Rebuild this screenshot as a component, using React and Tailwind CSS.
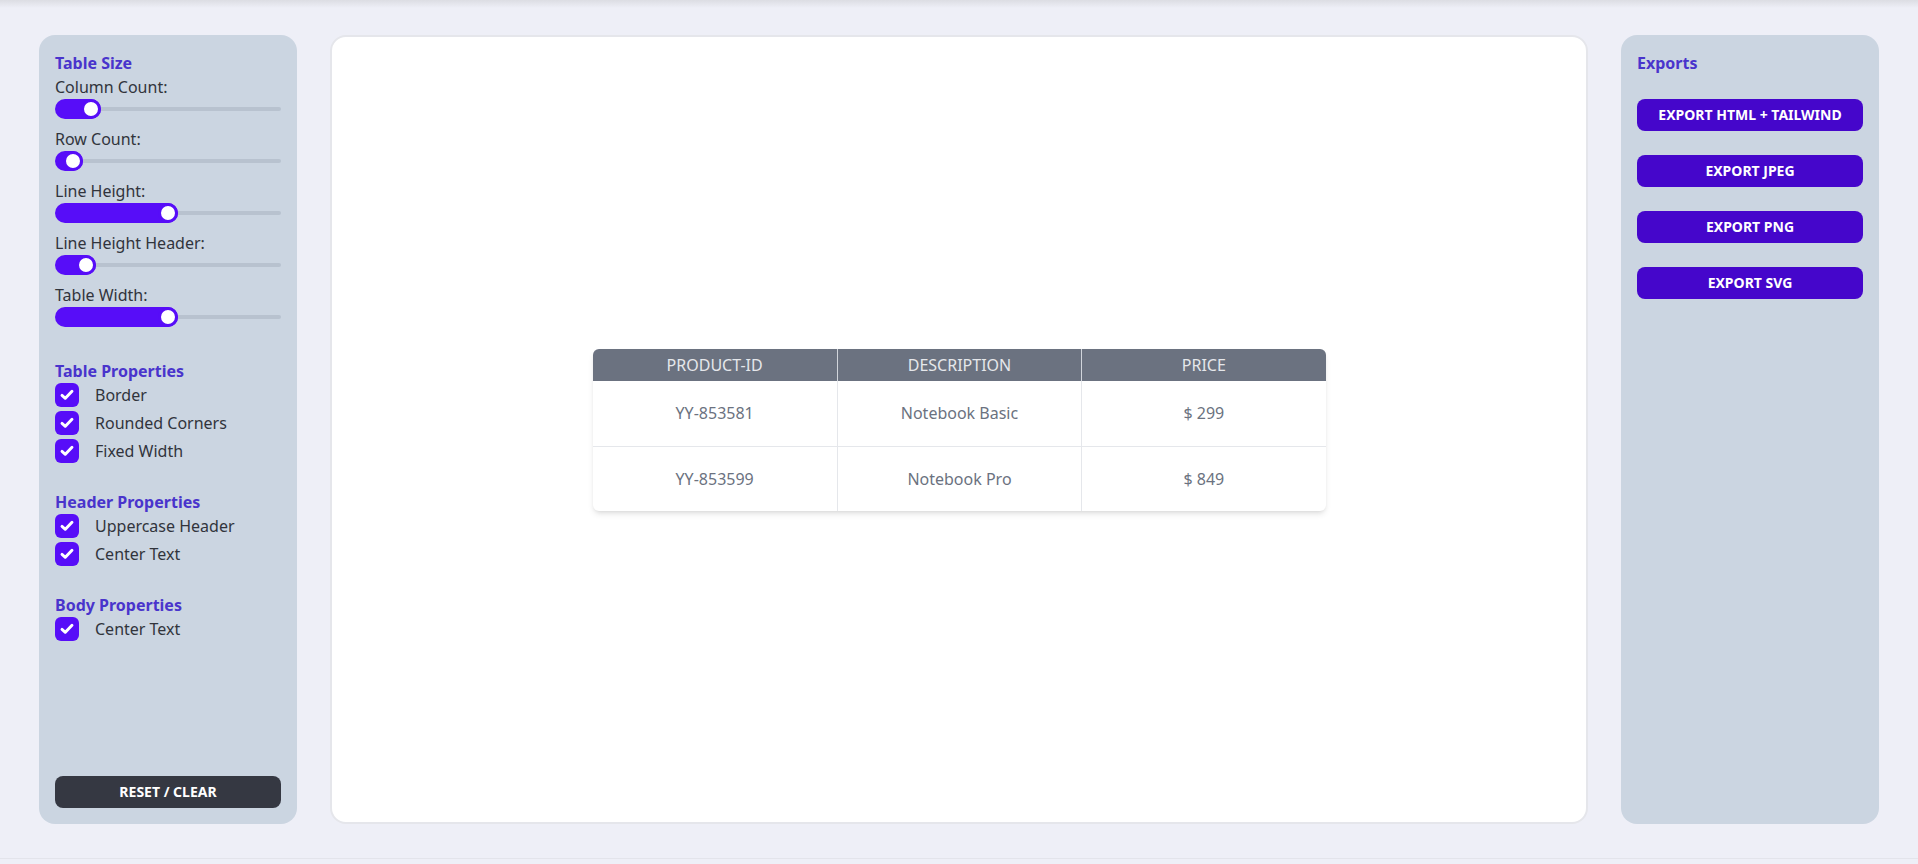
import React from "react";

const sliders = [
  { id: 1, label: "Column Count:", fill: 46 },
  { id: 2, label: "Row Count:", fill: 28 },
  { id: 3, label: "Line Height:", fill: 123 },
  { id: 4, label: "Line Height Header:", fill: 41 },
  { id: 5, label: "Table Width:", fill: 123 },
];

const sections = [
  { id: 1, title: "Table Properties", items: ["Border", "Rounded Corners", "Fixed Width"], gap: "mt-6" },
  { id: 2, title: "Header Properties", items: ["Uppercase Header", "Center Text"], gap: "mt-[27px]" },
  { id: 3, title: "Body Properties", items: ["Center Text"], gap: "mt-[27px]" },
];

const rows = [
  { id: "YY-853581", desc: "Notebook Basic", price: "$ 299" },
  { id: "YY-853599", desc: "Notebook Pro", price: "$ 849" },
];

const exportsList = ["Export HTML + Tailwind", "Export JPEG", "Export PNG", "Export SVG"];

const Heading = ({ children, className = "" }) => (
  <h2 className={`text-base leading-6 font-bold text-[#4934cc] ${className}`}>{children}</h2>
);

const Slider = ({ label, fill }) => (
  <div className="mb-2">
    <div className="text-base leading-6 text-[#31343c]">{label}</div>
    <div className="flex h-5 items-center">
      {/* filled part with thumb at its end */}
      <div className="flex h-5 justify-end rounded-full bg-[#570df8]" style={{ width: fill }}>
        <div className="h-5 w-5 rounded-full border-[3px] border-[#570df8] bg-white" />
      </div>
      <div className="h-1 flex-1 rounded-r-full bg-[#b8c2cf]" />
    </div>
  </div>
);

const Checkbox = ({ label }) => (
  <div className="flex items-center gap-4">
    <div className="flex h-6 w-6 items-center justify-center rounded-md bg-[#570df8]">
      <svg viewBox="0 0 24 24" className="h-5 w-5" fill="none" stroke="white" strokeWidth="3.5" strokeLinecap="round" strokeLinejoin="round">
        <path d="M6 12.5l4 3.5 8-8.5" />
      </svg>
    </div>
    <span className="text-base leading-6 text-[#31343c]">{label}</span>
  </div>
);

const App = () => {
  return (
    <div className="h-[864px] bg-[#eeeff7] font-['Noto_Sans',sans-serif]">
      <div className="h-[859px] border-b border-[#e3e4eb]">
        <div className="h-2 bg-gradient-to-b from-[#dcdde3] to-[#eeeff7]" />
        <div className="flex gap-[33px] px-[39px] pt-[27px]">
          {/* Left settings panel */}
          <div className="flex h-[789px] w-[258px] flex-col rounded-2xl bg-[#cbd5e1] p-4">
            <Heading>Table Size</Heading>
            {sliders.map((s) => (
              <Slider key={s.id} label={s.label} fill={s.fill} />
            ))}
            {sections.map((sec) => (
              <div key={sec.id} className={sec.gap}>
                <Heading>{sec.title}</Heading>
                <div className="flex flex-col gap-1">
                  {sec.items.map((item) => (
                    <Checkbox key={item} label={item} />
                  ))}
                </div>
              </div>
            ))}
            <button className="mt-auto h-8 w-full rounded-lg bg-[#353842] text-sm font-bold uppercase text-white">
              Reset / Clear
            </button>
          </div>

          {/* Preview */}
          <div className="flex h-[789px] flex-1 items-center justify-center rounded-2xl border-2 border-[#e5e6eb] bg-white">
            <div className="w-[733px] overflow-hidden rounded-md bg-white shadow-md">
              <div className="grid h-8 grid-cols-3 bg-[#6b7280] text-base text-[#e5e7eb]">
                <div className="flex items-center justify-center">PRODUCT-ID</div>
                <div className="flex items-center justify-center border-l border-[#d1d5db]">DESCRIPTION</div>
                <div className="flex items-center justify-center border-l border-[#d1d5db]">PRICE</div>
              </div>
              {rows.map((r, i) => (
                <div key={r.id} className={`grid h-[65px] grid-cols-3 text-base text-[#6b7280] ${i > 0 ? "border-t border-[#e5e7eb]" : ""}`}>
                  <div className="flex items-center justify-center">{r.id}</div>
                  <div className="flex items-center justify-center border-l border-[#e5e7eb]">{r.desc}</div>
                  <div className="flex items-center justify-center border-l border-[#e5e7eb]">{r.price}</div>
                </div>
              ))}
            </div>
          </div>

          {/* Exports panel */}
          <div className="flex h-[789px] w-[258px] flex-col rounded-2xl bg-[#cbd5e1] p-4">
            <Heading>Exports</Heading>
            <div className="mt-6 flex flex-col gap-6">
              {exportsList.map((label) => (
                <button key={label} className="h-8 w-full rounded-lg bg-[#4506cb] text-sm font-bold uppercase text-white">
                  {label}
                </button>
              ))}
            </div>
          </div>
        </div>
      </div>
    </div>
  );
};

export default App;
